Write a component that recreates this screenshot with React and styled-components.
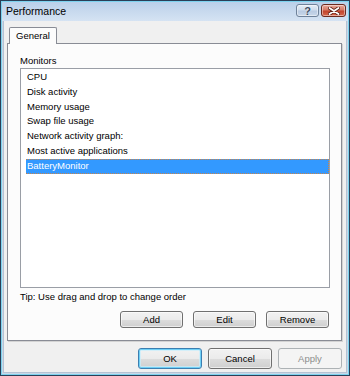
import React from "react";
import styled, { createGlobalStyle } from "styled-components";

const GlobalStyle = createGlobalStyle`
  html, body {
    margin: 0;
    padding: 0;
    background: #ffffff;
  }
  body {
    font-family: "Liberation Sans", Arial, sans-serif;
    color: #000;
  }
`;

const Window = styled.div`
  width: 350px;
  height: 376px;
  box-sizing: border-box;
  border: 1px solid #2b3f57;
  box-shadow: inset 0 0 0 1px #7dd3ef;
  background: linear-gradient(to bottom, #b9cfe9 0px, #d5e3f3 20px, #c9d8e8 20px);
  padding: 0 2px 2px;
  display: flex;
  flex-direction: column;
`;

const TitleBar = styled.div`
  height: 20px;
  display: flex;
  align-items: flex-start;
  padding-left: 3px;
  padding-right: 1px;
`;

const Title = styled.div`
  flex: 1;
  font-size: 10.5px;
  line-height: 20px;
  color: #000;
`;

const CaptionButton = styled.div`
  margin-top: 3px;
  height: 13px;
  width: ${(p) => p.$w}px;
  box-sizing: border-box;
  border: 1px solid ${(p) => (p.$close ? "#6b2a1e" : "#6f829a")};
  border-radius: 3px;
  margin-left: 2px;
  background: ${(p) =>
    p.$close
      ? "linear-gradient(to bottom, #e9a99b 0%, #d47a66 45%, #c2452d 55%, #d5674c 100%)"
      : "linear-gradient(to bottom, #e6eef7 0%, #cfdcec 45%, #b9cbe2 55%, #c9d8ea 100%)"};
  box-shadow: inset 0 0 0 1px rgba(255, 255, 255, 0.45);
  display: flex;
  align-items: center;
  justify-content: center;
  font-size: 11px;
  font-weight: bold;
  color: #3b4a5e;
  text-shadow: 0 0 1px #fff;
`;

const Client = styled.div`
  flex: 1;
  background: #f0f0f0;
  border: 1px solid #b4c3d4;
  border-top: none;
  display: flex;
  flex-direction: column;
  padding-top: 6px;
`;

const TabStrip = styled.div`
  display: flex;
  padding-left: 5px;
`;

const Tab = styled.div`
  position: relative;
  z-index: 1;
  height: 17px;
  box-sizing: border-box;
  padding: 0 6px;
  margin-bottom: -1px;
  border: 1px solid #898c95;
  border-bottom: none;
  border-radius: 2px 2px 0 0;
  background: #fcfcfc;
  font-size: 9.5px;
  line-height: 16px;
`;

const Panel = styled.div`
  height: 298px;
  box-sizing: border-box;
  margin: 0 4px 0 3px;
  border: 1px solid #898c95;
  box-shadow: 1px 1px 0 #d3d3d3;
  background: #fcfcfc;
  padding: 11px 11px 0 12px;
  display: flex;
  flex-direction: column;
`;

const Label = styled.div`
  font-size: 9.5px;
  line-height: 12px;
  height: 12px;
`;

const ListBox = styled.div`
  margin-top: 1px;
  height: 220px;
  box-sizing: border-box;
  border: 1px solid #9a9ea6;
  background: #ffffff;
  padding-top: 1px;
  display: flex;
  flex-direction: column;
`;

const Row = styled.div`
  height: 14.8px;
  line-height: 14.8px;
  box-sizing: border-box;
  margin-left: 5px;
  padding-left: 1px;
  font-size: 9.5px;
  white-space: nowrap;
  color: ${(p) => (p.$selected ? "#ffffff" : "#000000")};
  background: ${(p) => (p.$selected ? "#3399ff" : "transparent")};
  border: 1px dotted ${(p) => (p.$selected ? "#c8844a" : "transparent")};
  border-left: none;
  display: flex;
  align-items: center;
`;

const Tip = styled.div`
  margin-top: 3px;
  font-size: 9.5px;
  line-height: 12px;
`;

const ButtonRow = styled.div`
  display: flex;
  justify-content: flex-end;
  gap: ${(p) => p.$gap}px;
  margin-top: ${(p) => p.$top}px;
  margin-right: ${(p) => p.$right}px;
`;

const Button = styled.div`
  width: ${(p) => p.$w}px;
  height: ${(p) => p.$h}px;
  box-sizing: border-box;
  border: 1px solid
    ${(p) => (p.$default ? "#3c7fb1" : p.$disabled ? "#adb2b5" : "#707070")};
  border-radius: 3px;
  background: ${(p) =>
    p.$disabled
      ? "#f4f4f4"
      : "linear-gradient(to bottom, #f2f2f2 0%, #ebebeb 50%, #dddddd 50%, #cfcfcf 100%)"};
  box-shadow: ${(p) =>
    p.$default
      ? "inset 0 0 0 1px #6fd0f6, inset 0 0 0 2px rgba(200,238,252,0.7)"
      : p.$disabled
      ? "none"
      : "inset 0 0 0 1px rgba(255,255,255,0.6)"};
  color: ${(p) => (p.$disabled ? "#8d8d8d" : "#000")};
  font-size: 9.5px;
  display: flex;
  align-items: center;
  justify-content: center;
`;

const monitors = [
  "CPU",
  "Disk activity",
  "Memory usage",
  "Swap file usage",
  "Network activity graph:",
  "Most active applications",
  "BatteryMonitor",
];

function CloseGlyph() {
  return (
    <svg width="12" height="8" viewBox="0 0 12 8">
      <path d="M1.5 1 L10.5 7 M10.5 1 L1.5 7" stroke="#5a1c12" strokeWidth="3.4" strokeLinecap="round" />
      <path d="M1.5 1 L10.5 7 M10.5 1 L1.5 7" stroke="#ffffff" strokeWidth="1.8" strokeLinecap="round" />
    </svg>
  );
}

export default function App() {
  return (
    <>
      <GlobalStyle />
      <Window>
        <TitleBar>
          <Title>Performance</Title>
          <CaptionButton $w={23}>?</CaptionButton>
          <CaptionButton $w={25} $close>
            <CloseGlyph />
          </CaptionButton>
        </TitleBar>
        <Client>
          <TabStrip>
            <Tab>General</Tab>
          </TabStrip>
          <Panel>
            <Label>Monitors</Label>
            <ListBox>
              {monitors.map((m) => (
                <Row key={m} $selected={m === "BatteryMonitor"}>
                  {m}
                </Row>
              ))}
            </ListBox>
            <Tip>Tip: Use drag and drop to change order</Tip>
            <ButtonRow $gap={10} $top={8} $right={1}>
              <Button $w={63} $h={17}>Add</Button>
              <Button $w={63} $h={17}>Edit</Button>
              <Button $w={63} $h={17}>Remove</Button>
            </ButtonRow>
          </Panel>
          <ButtonRow $gap={6} $top={7} $right={4}>
            <Button $w={64} $h={21} $default>OK</Button>
            <Button $w={64} $h={21}>Cancel</Button>
            <Button $w={64} $h={21} $disabled>Apply</Button>
          </ButtonRow>
        </Client>
      </Window>
    </>
  );
}
